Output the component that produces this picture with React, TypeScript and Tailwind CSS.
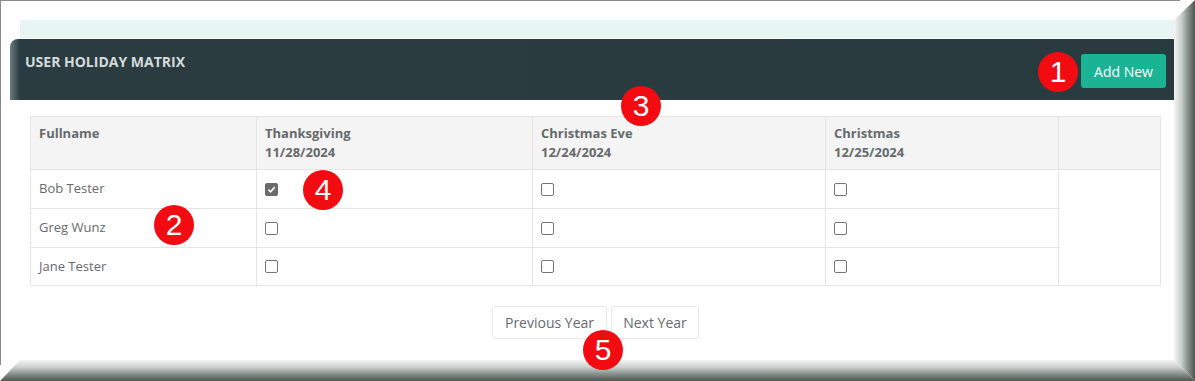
import React from 'react'

const holidays = [
  { name: 'Thanksgiving', date: '11/28/2024', width: 'w-[276px]' },
  { name: 'Christmas Eve', date: '12/24/2024', width: 'w-[293px]' },
  { name: 'Christmas', date: '12/25/2024', width: 'w-[233px]' },
]

const users = [
  { name: 'Bob Tester', checks: [true, false, false] },
  { name: 'Greg Wunz', checks: [false, false, false] },
  { name: 'Jane Tester', checks: [false, false, false] },
]

function Check({ checked }: { checked: boolean }) {
  if (checked) {
    return (
      <span className="inline-flex w-[13px] h-[13px] rounded-[2px] bg-[#6b6b6b] items-center justify-center">
        <svg width="9" height="9" viewBox="0 0 10 10">
          <path d="M1.5 5.2 L4 7.6 L8.6 2.4" fill="none" stroke="#fff" strokeWidth="1.8" />
        </svg>
      </span>
    )
  }
  return <span className="inline-block w-[13px] h-[13px] rounded-[2px] border border-[#767676] bg-white" />
}

function Badge({ n, className }: { n: number; className: string }) {
  return (
    <div
      className={`absolute w-[40px] h-[40px] rounded-full bg-[#f20c12] text-white flex items-center justify-center text-[30px] leading-none font-['Liberation_Sans',Arial,sans-serif] ${className}`}
    >
      {n}
    </div>
  )
}

export default function App() {
  return (
    <div className="relative w-[1195px] h-[381px] bg-white overflow-hidden font-['Open_Sans','Noto_Sans',sans-serif]">
      {/* frame lines */}
      <div className="absolute left-0 top-0 w-[1180px] h-px bg-[#8a8a8a]" />
      <div className="absolute left-0 top-0 w-px h-[365px] bg-[#8a8a8a]" />

      <div className="pt-[20px]">
        {/* light strip */}
        <div className="ml-[20px] w-[1155px] h-[18px] bg-[#e8f6f3]" />

        {/* panel header */}
        <div className="ml-[10px] mt-px w-[1171px] h-[61px] rounded-t-[8px] bg-[linear-gradient(to_right,#6a7b7e,#2b3c41_10px,#2a3b40_calc(100%-8px),#1e2a2e)] flex items-start justify-between pl-[15px] pr-[15px]">
          <div className="pt-[12px] text-[14px] font-bold text-[#d3dbdc]">USER HOLIDAY MATRIX</div>
          <button className="mt-[15px] w-[85px] h-[34px] rounded-[3px] bg-[#1ab394] text-white text-[14px]">Add New</button>
        </div>

        {/* table */}
        <div className="ml-[30px] mt-[16px] w-[1131px]">
          <table className="border-collapse text-[#676a6c] w-[1131px] table-fixed">
            <thead>
              <tr className="bg-[#f4f4f4] h-[53px]">
                <th className="w-[226px] border border-[#e5e5e5] text-left align-top pl-[8px] pt-[7px] text-[13px] font-bold leading-[19px]">Fullname</th>
                {holidays.map((h) => (
                  <th key={h.name} className={`${h.width} border border-[#e5e5e5] text-left align-top pl-[8px] pt-[7px] text-[13px] font-bold leading-[19px]`}>
                    {h.name}
                    <br />
                    {h.date}
                  </th>
                ))}
                <th className="w-[102px] border border-[#e5e5e5]" />
              </tr>
            </thead>
            <tbody>
              {users.map((u, i) => (
                <tr key={u.name} className={i === 2 ? 'h-[38px]' : 'h-[39px]'}>
                  <td className="border border-[#e5e5e5] pl-[8px] text-[13px] align-middle">{u.name}</td>
                  {u.checks.map((c, j) => (
                    <td key={j} className="border border-[#e5e5e5] pl-[8px] align-middle">
                      <div className="flex items-center">
                        <Check checked={c} />
                      </div>
                    </td>
                  ))}
                  {i === 0 && <td rowSpan={3} className="border border-[#e5e5e5]" />}
                </tr>
              ))}
            </tbody>
          </table>

          {/* pager */}
          <div className="mt-[20px] flex justify-center gap-[4px] text-[14px] text-[#676a6c]">
            <button className="w-[115px] h-[33px] border border-[#e7eaec] rounded-[3px] bg-white">Previous Year</button>
            <button className="w-[88px] h-[33px] border border-[#e7eaec] rounded-[3px] bg-white">Next Year</button>
          </div>
        </div>
      </div>

      {/* bevel frame */}
      <div className="absolute right-0 top-0 w-[21px] h-[381px] bg-[linear-gradient(to_right,#f4f4f4,#c9cfcc_35%,#8a938f_65%,#4f5652)] [clip-path:polygon(0_20px,100%_0,100%_100%,0_360px)]" />
      <div className="absolute left-0 bottom-0 w-[1195px] h-[21px] bg-[linear-gradient(to_bottom,#f4f4f4,#c9cfcc_35%,#8a938f_65%,#4f5652)] [clip-path:polygon(20px_0,1174px_0,100%_100%,0_100%)]" />

      {/* callouts */}
      <Badge n={1} className="left-[1038px] top-[52px]" />
      <Badge n={2} className="left-[154px] top-[205px]" />
      <Badge n={3} className="left-[621px] top-[86px]" />
      <Badge n={4} className="left-[303px] top-[170px]" />
      <Badge n={5} className="left-[583px] top-[330px]" />
    </div>
  )
}
